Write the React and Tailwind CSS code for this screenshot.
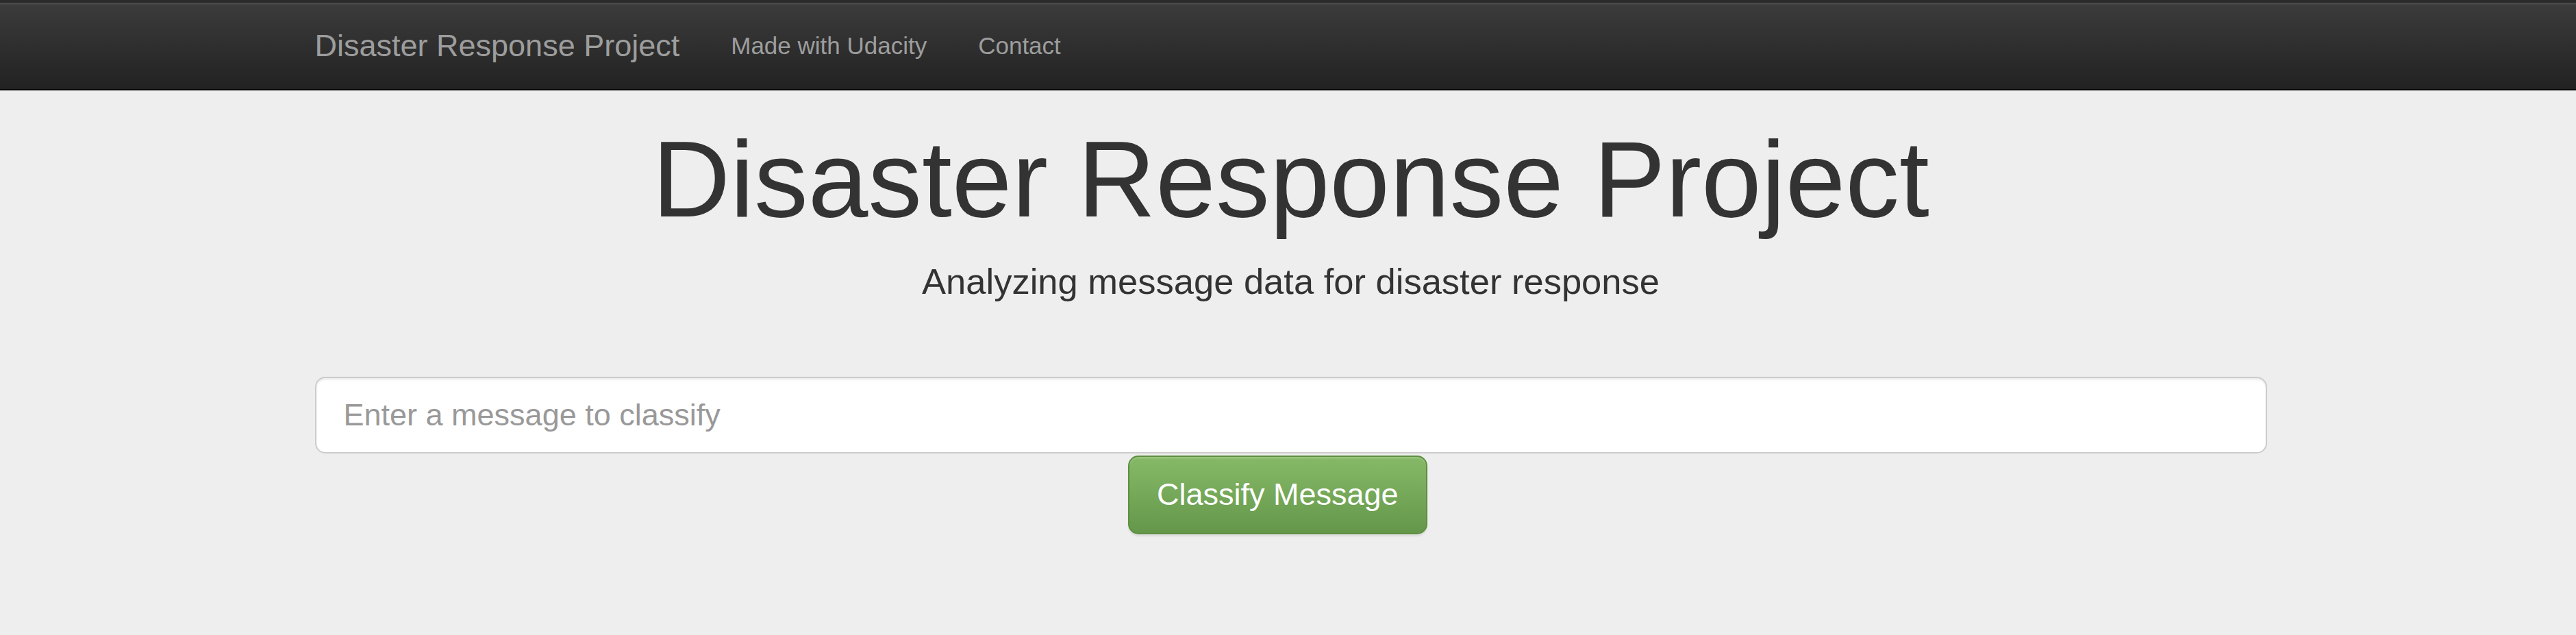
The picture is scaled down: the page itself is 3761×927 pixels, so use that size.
export default function App() {
  return (
    <div className="min-h-screen bg-[#eee] text-[#333] font-['Liberation_Sans',Arial,sans-serif]">
      {/* Top navbar */}
      <div className="h-[4px] bg-[#2b2b2b]"></div>
      <nav className="h-[127.5px] pl-[8px] bg-linear-to-b from-[#3c3c3c] to-[#222] border-b-[2.5px] border-[#080808] shadow-[inset_0_2.5px_0_rgba(255,255,255,0.08)]">
        <div className="w-[2925px] mx-auto flex">
          <a className="px-[37.5px] py-[37.5px] text-[45px] leading-[50px] text-[#9d9d9d]">
            Disaster Response Project
          </a>
          <a className="px-[37.5px] py-[37.5px] text-[35px] leading-[50px] text-[#9d9d9d]">
            Made with Udacity
          </a>
          <a className="px-[37.5px] py-[37.5px] text-[35px] leading-[50px] text-[#9d9d9d]">
            Contact
          </a>
        </div>
      </nav>

      {/* Jumbotron */}
      <div className="pl-[8px]">
        <div className="w-[2925px] mx-auto px-[37.5px]">
          <h1 className="mt-[43px] mb-[25px] text-center text-[157.5px] leading-[1.1] font-normal">
            Disaster Response Project
          </h1>
          <p className="text-center text-[52.5px] leading-[75px]">
            Analyzing message data for disaster response
          </p>
          <hr className="mt-[50px] mb-[50px] border-0 border-t-[2.5px] border-[#eee]" />

          <form>
            <input
              type="text"
              placeholder="Enter a message to classify"
              className="block w-full h-[112.5px] px-[40px] text-[45px] text-[#555] bg-white border-[2.5px] border-[#ccc] rounded-[15px] shadow-[inset_0_2.5px_2.5px_rgba(0,0,0,0.075)] placeholder:text-[#999] outline-none"
            />
            <div className="ml-[41.6667%] pt-[2.5px]">
              <button
                type="submit"
                className="h-[115px] px-[40px] text-[45px] leading-[60px] text-white rounded-[15px] border-[2.5px] border-[#5e8f40] bg-linear-to-b from-[#86b967] to-[#64974a] shadow-[inset_0_2.5px_0_rgba(255,255,255,0.15),0_2.5px_2.5px_rgba(0,0,0,0.075)]"
              >
                Classify Message
              </button>
            </div>
          </form>
        </div>
      </div>
    </div>
  );
}
